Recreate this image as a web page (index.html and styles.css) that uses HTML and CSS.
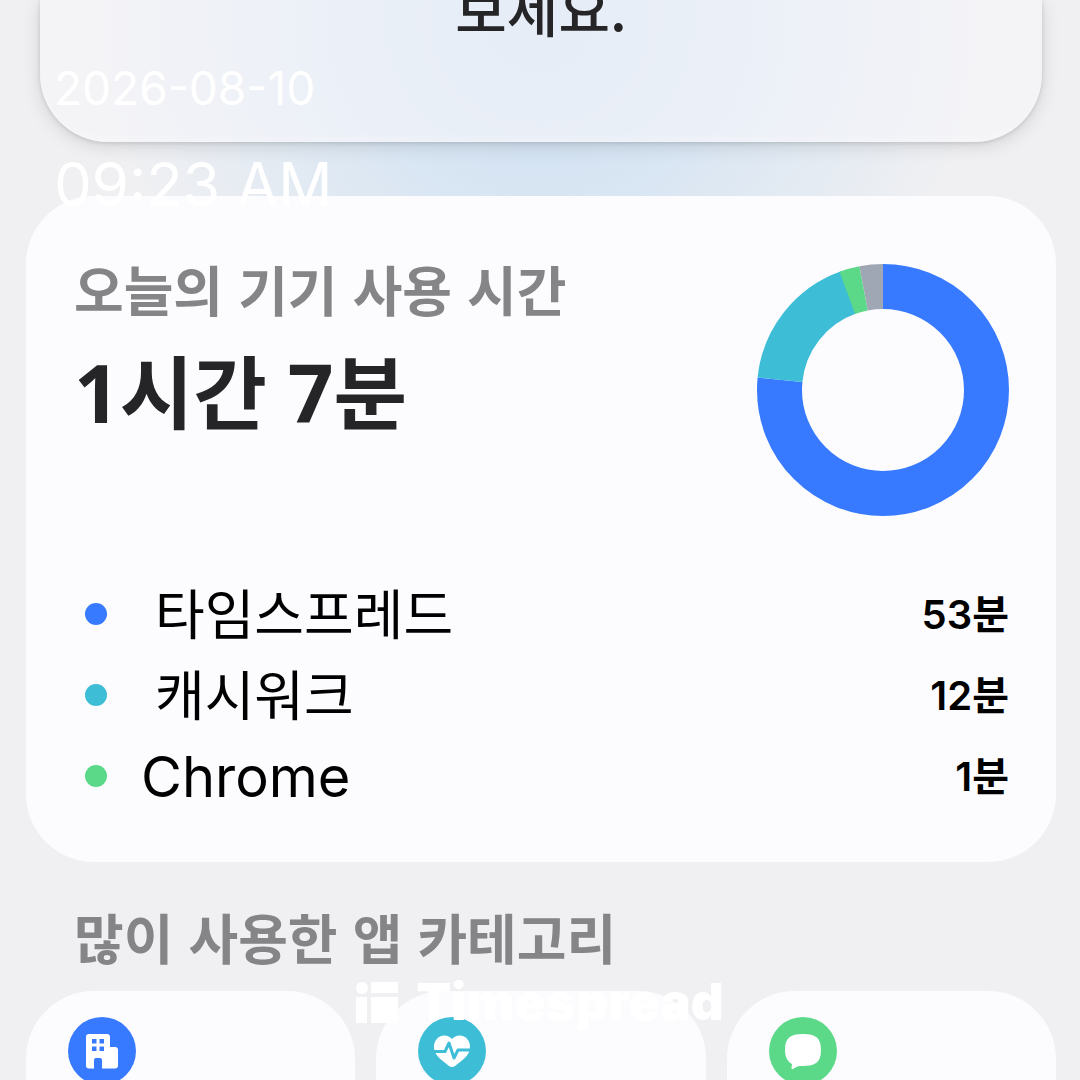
FILE: index.html
```
<!DOCTYPE html>
<html lang="ko">
<head>
    <meta charset="UTF-8">
    <meta name="viewport" content="width=device-width, initial-scale=1.0">
    <title>기기 사용 시간</title>
    <link rel="stylesheet" href="styles.css">
</head>
<body>
    <main class="screen">
        <section class="notice">
            <p>보세요.</p>
        </section>

        <section class="usage">
            <div class="usage-top">
                <div>
                    <h1 class="title">오늘의 기기 사용 시간</h1>
                    <p class="total">1시간 7분</p>
                </div>
                <svg class="donut" viewBox="0 0 252 252" role="img" aria-label="앱별 사용 시간">
                    <g fill="none" stroke-width="45" transform="rotate(-90 126 126)">
                        <circle cx="126" cy="126" r="103.5" pathLength="1000" stroke="#387aff" stroke-dasharray="766 234"/>
                        <circle cx="126" cy="126" r="103.5" pathLength="1000" stroke="#3ebdd7" stroke-dasharray="180 820" stroke-dashoffset="-766"/>
                        <circle cx="126" cy="126" r="103.5" pathLength="1000" stroke="#5bd988" stroke-dasharray="26 974" stroke-dashoffset="-944"/>
                        <circle cx="126" cy="126" r="103.5" pathLength="1000" stroke="#a0a7b4" stroke-dasharray="30 970" stroke-dashoffset="-970"/>
                    </g>
                </svg>
            </div>
            <ul class="apps">
                <li><span class="dot blue"></span><span class="name korean">타임스프레드</span><span class="time">53분</span></li>
                <li><span class="dot teal"></span><span class="name korean">캐시워크</span><span class="time">12분</span></li>
                <li><span class="dot green"></span><span class="name">Chrome</span><span class="time">1분</span></li>
            </ul>
        </section>

        <h2 class="title section-title">많이 사용한 앱 카테고리</h2>
        <section class="categories">
            <div class="category">
                <span class="icon blue">
                    <svg viewBox="0 0 68 68">
                        <path fill="#fff" fill-rule="evenodd" d="M21 17h18q3 0 3 3v10h5q3 0 3 3v15.500q0 3-3 3H34V43q0-2-2-2h-4q-2 0-2 2v8.500h-5q-3 0-3-3V20q0-3 3-3zM24 22v4.500h4.500V22zM31.500 22v4.500H36V22zM24 29.500V34h4.500v-4.500zM31.500 29.500V34H36v-4.500z"/>
                    </svg>
                </span>
            </div>
            <div class="category">
                <span class="icon teal">
                    <svg viewBox="0 0 68 68">
                        <path fill="#fff" d="M34 22c-3-3.500-8-4.500-12-2.500-5 2.500-7 8-5.500 14 1 4 4 7 7 9.500l7.500 6q3 2 6 0l7.500-6c3-2.500 6-5.500 7-9.500 1.500-6-.5-11.500-5.500-14-4-2-9-1-12 2.500z"/>
                        <path fill="none" stroke="#3ebdd7" stroke-width="3" stroke-linejoin="round" d="M14 34.500h13l4-8.500 5 15 4-8h14"/>
                    </svg>
                </span>
            </div>
            <div class="category">
                <span class="icon green">
                    <svg viewBox="0 0 68 68">
                        <path fill="#fff" d="M34 17c13 0 18 4 18 16S47 49 34 49h-3c-2 0-4 1-7 3-1 .5-1.500 0-1.500-1l.5-4C18.500 44.500 16 40 16 33c0-12 5-16 18-16z"/>
                    </svg>
                </span>
            </div>
        </section>

        <div class="stamp">
            <time class="date">2026-08-10</time>
            <time class="clock">09:23 AM</time>
        </div>
        <div class="watermark">
            <svg viewBox="0 0 42 41">
                <g fill="#fff">
                    <circle cx="6" cy="6" r="6"/>
                    <path d="M15 0h27v11H15zM0 15h11v26H0zM15 15h27v26H15z"/>
                </g>
            </svg>
            <span>Timespread</span>
        </div>
    </main>
</body>
</html>
```

FILE: styles.css
```
* {
    box-sizing: border-box;
}
body {
    margin: 0;
    font-family: "Noto Sans CJK KR", sans-serif;
    color: #000;
    background: #f0f0f2;
}
h1, h2, p, ul {
    margin: 0;
    padding: 0;
}
.screen {
    position: relative;
    height: 100vh;
    overflow: hidden;
    padding: 0 24px 0 26px;
    background: radial-gradient(ellipse 440px 420px at 50% 20px, #cbddf0 0%, #d7e5f3 40%, #f0f0f200 100%) #f0f0f2;
}
.notice {
    margin: 0 14px;
    padding-bottom: 126px;
    border-radius: 0 0 68px 68px;
    background: #f6f6faa0;
    box-shadow: 0 4px 18px #00000020, 0 1px 4px #00000020, inset 0 -8px 12px -6px #ffffff60;
    text-align: center;
    font-size: 56px;
    line-height: 16px;
    font-weight: 500;
    color: #252527;
}
.usage {
    margin-top: 54px;
    padding: 64px 47px 46px 48px;
    border-radius: 68px;
    background: #fcfcfe;
}
.usage-top {
    display: flex;
    justify-content: space-between;
}
.title {
    font-size: 54px;
    line-height: 58px;
    font-weight: 700;
    color: #858587;
}
.total {
    margin-top: 28px;
    font-family: "Noto Sans", "Noto Sans CJK KR", sans-serif;
    font-size: 80px;
    line-height: 92px;
    font-weight: 700;
    color: #252527;
}
.donut {
    width: 252px;
    height: 252px;
    margin-top: 4px;
}
.apps {
    margin-top: 57px;
    list-style: none;
}
.apps li {
    display: flex;
    align-items: center;
    height: 81px;
    padding-left: 11px;
}
.dot {
    width: 22px;
    height: 22px;
    margin-right: 34px;
    border-radius: 50%;
}
.blue {
    background: #387aff;
}
.teal {
    background: #3ebdd7;
}
.green {
    background: #5bd988;
}
.name {
    flex: 1;
    padding-top: 3px;
    font-family: Inter, "Noto Sans CJK KR", sans-serif;
    font-size: 56px;
    line-height: 78px;
}
.korean {
    padding-top: 5px;
    padding-left: 14px;
    font-size: 54px;
}
.time {
    padding-top: 3px;
    font-family: Inter, "Noto Sans CJK KR", sans-serif;
    font-size: 40px;
    line-height: 78px;
    font-weight: 600;
}
.section-title {
    margin: 46px 0 25px 48px;
}
.categories {
    display: grid;
    grid-template-columns: repeat(3, 1fr);
    gap: 21px;
}
.category {
    height: 260px;
    padding: 26px 42px;
    border-radius: 68px;
    background: #fcfcfe;
}
.icon {
    display: block;
    width: 68px;
    height: 68px;
    border-radius: 50%;
}
/* overlays */
.stamp {
    position: absolute;
    top: 60px;
    left: 54px;
    display: flex;
    flex-direction: column;
    gap: 26px;
    font-family: Inter, sans-serif;
    color: #fff;
}
.date {
    font-size: 46px;
    line-height: 56px;
}
.clock {
    font-size: 60px;
    line-height: 84px;
}
.watermark {
    position: absolute;
    top: 970px;
    left: 0;
    right: 0;
    display: flex;
    justify-content: center;
    align-items: center;
    gap: 18px;
    font-family: Inter, sans-serif;
    font-size: 51px;
    line-height: 64px;
    font-weight: 900;
    color: #fff;
}
.watermark svg {
    width: 42px;
    height: 41px;
}
```
